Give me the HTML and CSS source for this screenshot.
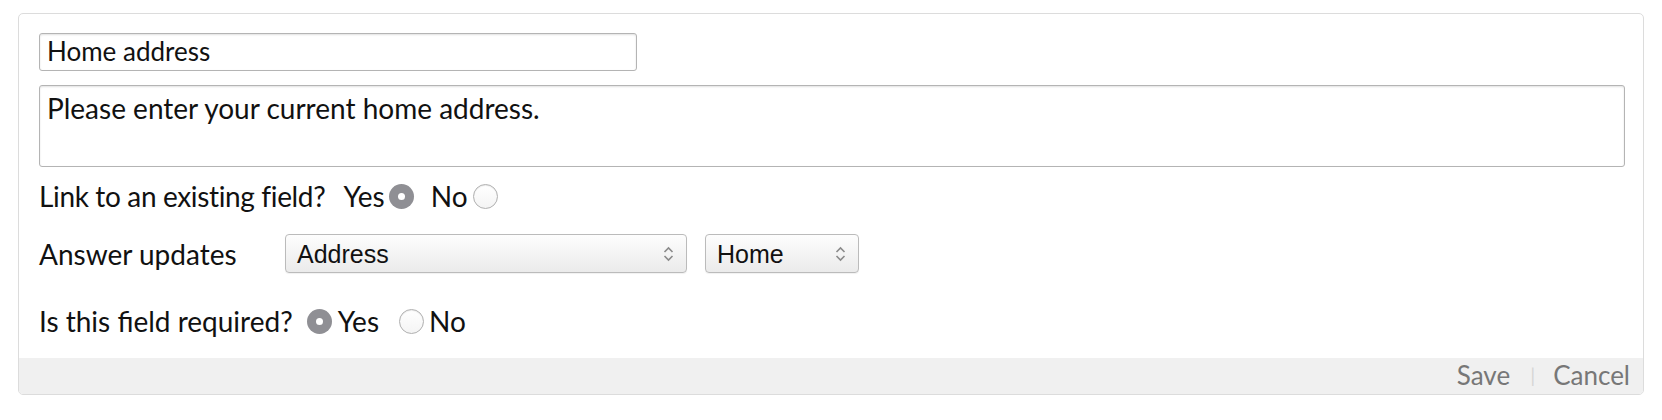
FILE: index.html
```html
<!DOCTYPE html>
<html>
<head>
<meta charset="utf-8">
<link rel="stylesheet" href="styles.css">
</head>
<body>
<div class="panel">
  <div class="body">
    <div class="field-input">Home address</div>
    <div class="field-textarea">Please enter your current home address.</div>
    <div class="row row-link">
      <span class="label">Link to an existing field?</span>
      <span class="opt opt-yes">Yes</span><span class="radio checked"></span>
      <span class="opt opt-no">No</span><span class="radio"></span>
    </div>
    <div class="row row-answer">
      <span class="label label-fixed">Answer updates</span>
      <div class="select select-wide"><span>Address</span>
        <svg class="chev" width="11" height="18" viewBox="0 0 11 18"><path d="M1.5 7 L5.5 3 L9.5 7 M1.5 11 L5.5 15 L9.5 11" fill="none" stroke="#8a8a8a" stroke-width="1.6"/></svg>
      </div>
      <div class="select select-narrow"><span>Home</span>
        <svg class="chev" width="11" height="18" viewBox="0 0 11 18"><path d="M1.5 7 L5.5 3 L9.5 7 M1.5 11 L5.5 15 L9.5 11" fill="none" stroke="#8a8a8a" stroke-width="1.6"/></svg>
      </div>
    </div>
    <div class="row row-required">
      <span class="label">Is this field required?</span>
      <span class="radio checked r1"></span><span class="opt">Yes</span>
      <span class="radio r2"></span><span class="opt">No</span>
    </div>
  </div>
  <div class="footer">
    <span class="action">Save</span><span class="sep">|</span><span class="action">Cancel</span>
  </div>
</div>
</body>
</html>
```
FILE: styles.css
```css
html, body {
  margin: 0;
  padding: 0;
  background: #fff;
}
body {
  font-family: Lato, "Liberation Sans", sans-serif;
  font-size: 28px;
  color: #111;
}
.panel {
  margin: 13px 18px 0 18px;
  border: 1px solid #dcdcdc;
  border-radius: 5px;
  overflow: hidden;
  box-sizing: border-box;
  width: 1626px;
}
.body {
  padding: 19px 18px 22px 20px;
  display: flex;
  flex-direction: column;
}
.field-input {
  width: 598px;
  height: 38px;
  box-sizing: border-box;
  border: 1px solid #b4b4b4;
  border-radius: 3px;
  box-shadow: inset 0 1px 2px rgba(0,0,0,0.12);
  padding: 0 7px;
  font-size: 26px;
  line-height: 34px;
}
.field-textarea {
  margin-top: 14px;
  height: 82px;
  box-sizing: border-box;
  border: 1px solid #b4b4b4;
  border-radius: 3px;
  box-shadow: inset 0 1px 2px rgba(0,0,0,0.12);
  padding: 7px 7px;
  line-height: 30px;
}
.row {
  display: flex;
  align-items: center;
  line-height: 30px;
}
.row-link {
  margin-top: 14px;
}
.row-link .label {
  letter-spacing: -0.35px;
  margin-right: 18px;
}
.opt-yes {
  margin-right: 4px;
}
.opt-no {
  margin-left: 17px;
  margin-right: 5px;
}
.radio {
  width: 25px;
  height: 25px;
  box-sizing: border-box;
  border-radius: 50%;
  border: 1px solid #b0b0b0;
  background: linear-gradient(#fff, #f4f4f4);
  box-shadow: inset 0 1px 1px rgba(0,0,0,0.08);
  position: relative;
  flex: none;
}
.radio.checked {
  border: none;
  background: #8f8f94;
  box-shadow: none;
}
.radio.checked::after {
  content: "";
  position: absolute;
  left: 9px;
  top: 9px;
  width: 7px;
  height: 7px;
  border-radius: 50%;
  background: #fff;
}
.row-answer {
  margin-top: 23px;
}
.label-fixed {
  width: 246px;
  flex: none;
}
.select {
  height: 39px;
  box-sizing: border-box;
  border: 1px solid #bbb;
  border-radius: 4px;
  background: linear-gradient(#fdfdfd, #ebebeb);
  box-shadow: 0 1px 1px rgba(0,0,0,0.06);
  display: flex;
  align-items: center;
  justify-content: space-between;
  padding: 0 12px 0 11px;
  font-family: "Liberation Sans", Arial, sans-serif;
  font-size: 25px;
  color: #111;
}
.select-wide {
  width: 402px;
}
.select-narrow {
  width: 154px;
  margin-left: 18px;
}
.chev {
  display: block;
}
.row-required {
  margin-top: 33px;
}
.row-required .label {
  margin-right: 14px;
}
.r1 {
  margin-right: 6px;
}
.r2 {
  margin-left: 20px;
  margin-right: 5px;
}
.footer {
  background: #f0f0f0;
  height: 36px;
  box-sizing: border-box;
  display: flex;
  justify-content: flex-end;
  align-items: flex-end;
  padding: 0 13px 4px 0;
  font-size: 26px;
  line-height: 30px;
  color: #777;
}
.sep {
  color: #d6d6d6;
  font-size: 20px;
  margin: 0 18px 0 20px;
}
```
